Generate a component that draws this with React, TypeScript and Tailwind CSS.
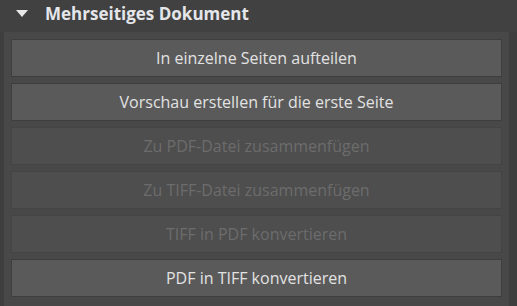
import React from 'react';

const actions = [
    { label: 'In einzelne Seiten aufteilen', enabled: true },
    { label: 'Vorschau erstellen für die erste Seite', enabled: true },
    { label: 'Zu PDF-Datei zusammenfügen', enabled: false },
    { label: 'Zu TIFF-Datei zusammenfügen', enabled: false },
    { label: 'TIFF in PDF konvertieren', enabled: false },
    { label: 'PDF in TIFF konvertieren', enabled: true },
];

export default function App() {
    return (
        <div
            className="w-[517px] h-[306px] bg-[#3e3e3e] flex flex-col overflow-hidden"
            style={{ fontFamily: '"Open Sans", "Noto Sans", sans-serif' }}
        >
            {/* Section header */}
            <div className="h-[32px] flex items-center bg-[#414141] pr-[7px] pb-[5px]">
                <svg width="12" height="7" viewBox="0 0 12 7" className="ml-[16px] mr-[17px]">
                    <polygon points="0,0 12,0 6,7" fill="#e8e8e8" />
                </svg>
                <span className="text-[17px] font-bold text-[#e4e6ea] leading-none">Mehrseitiges Dokument</span>
            </div>

            {/* Body */}
            <div className="flex-1 ml-[4px] mr-[8px] bg-[#484848] px-[7px] pt-[7px] flex flex-col gap-[6px]">
                {actions.map((a) => (
                    <button
                        key={a.label}
                        type="button"
                        disabled={!a.enabled}
                        className={
                            a.enabled
                                ? 'h-[38px] w-full border border-[#3e3e3e] bg-[#5a5a5a] text-[16px] text-[#e2e2e2]'
                                : 'h-[38px] w-full border border-[#444444] bg-[#4e4e4e] text-[16px] text-[#6c6c6c]'
                        }
                    >
                        {a.label}
                    </button>
                ))}
            </div>
        </div>
    );
}
